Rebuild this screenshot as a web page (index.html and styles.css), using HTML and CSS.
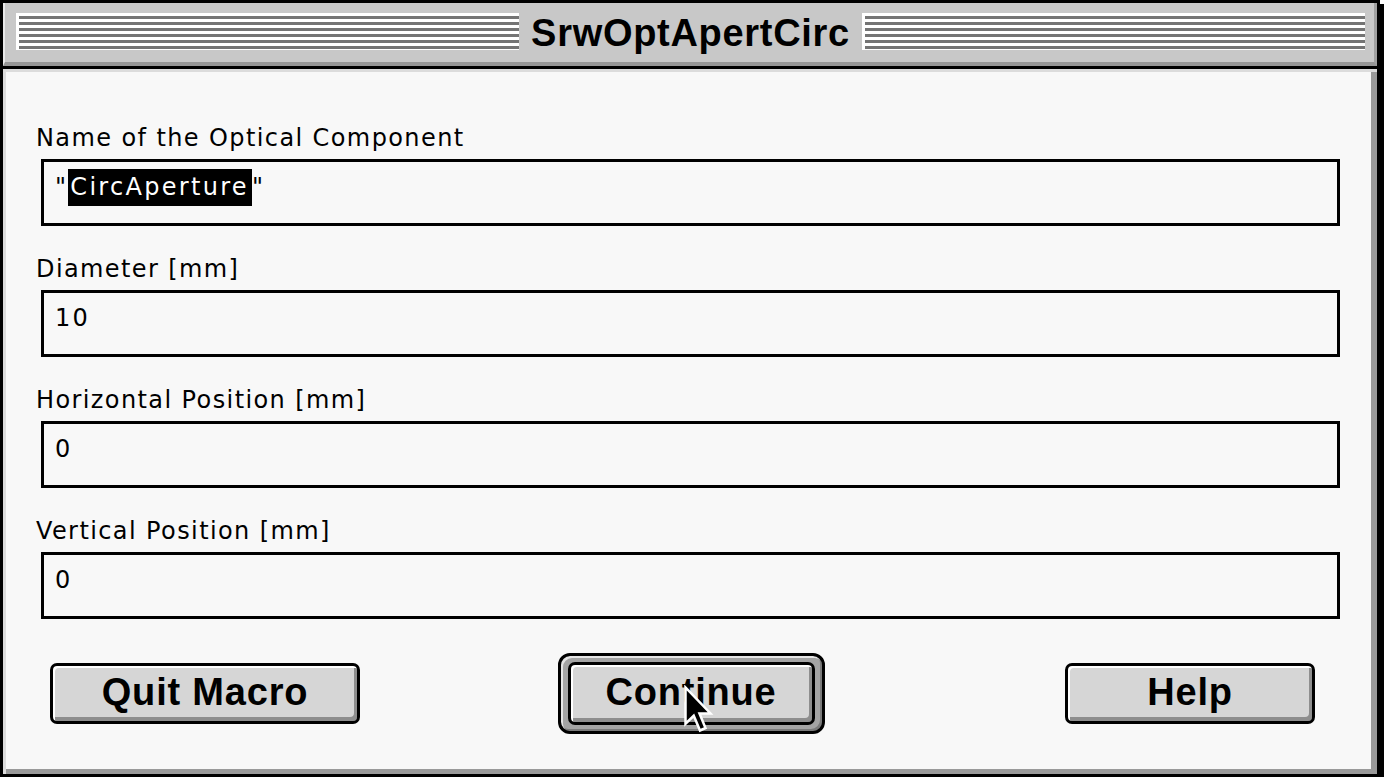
FILE: index.html
```html
<!DOCTYPE html>
<html>
<head>
<meta charset="utf-8">
<title>SrwOptApertCirc</title>
<link rel="stylesheet" href="styles.css">
</head>
<body>
<div class="window">
  <div class="titlebar">
    <div class="stripes"></div>
    <div class="title">SrwOptApertCirc</div>
    <div class="stripes"></div>
  </div>
  <div class="content">
    <div class="group">
      <div class="label">Name of the Optical Component</div>
      <div class="field">"<span class="sel">CircAperture</span>"</div>
    </div>
    <div class="group">
      <div class="label">Diameter [mm]</div>
      <div class="field">10</div>
    </div>
    <div class="group">
      <div class="label">Horizontal Position [mm]</div>
      <div class="field">0</div>
    </div>
    <div class="group">
      <div class="label">Vertical Position [mm]</div>
      <div class="field">0</div>
    </div>
    <div class="buttons">
      <div class="btn btn-quit">Quit Macro</div>
      <div class="ring"><div class="btn btn-continue">Continue</div></div>
      <div class="btn btn-help">Help</div>
    </div>
  </div>
  <svg class="cursor" width="34" height="50" viewBox="0 0 13.6 20" xmlns="http://www.w3.org/2000/svg">
    <path d="M1 1 L1 15.5 L4.3 12.3 L6.8 18.2 L9 17.2 L6.6 11.4 L11 11.4 Z" fill="#000" stroke="#fff" stroke-width="1" stroke-linejoin="miter"/>
  </svg>
</div>
</body>
</html>
```

FILE: styles.css
```css
* { box-sizing: border-box; }

html, body {
  margin: 0;
  padding: 0;
  background: #ffffff;
}

.window {
  position: relative;
  width: 1380px;
  height: 777px;
  border: 3px solid #000;
  box-shadow: 4px 4px 0 #000;
  display: flex;
  flex-direction: column;
  background: #f8f8f8;
}

.titlebar {
  height: 63px;
  flex: none;
  display: flex;
  align-items: flex-start;
  background: #c8c8c8;
  border-left: 2px solid #e8e8e8;
  border-right: 3px solid #a0a0a0;
  border-bottom: 4px solid #969696;
  padding: 10px 9px 0 11px;
}

.stripes {
  flex: 1;
  height: 37px;
  background: repeating-linear-gradient(to bottom, #ffffff 0, #ffffff 3px, #747474 3px, #747474 6px);
  border-left: 3px solid #ffffff;
}

.title {
  flex: none;
  padding: 0 12px;
  height: 42px;
  margin-top: -1px;
  font-family: "Liberation Sans", Arial, sans-serif;
  font-weight: bold;
  font-size: 38px;
  letter-spacing: 0.7px;
  line-height: 42px;
  color: #000;
}

.content {
  flex: 1;
  border-top: 3px solid #000;
  box-shadow: inset 3px 3px 0 #dcdcdc, inset -6px -5px 0 #9a9a9a;
  padding: 54px 37px 0 33px;
  display: flex;
  flex-direction: column;
}

.group {
  margin-bottom: 28px;
}

.label {
  font-family: "DejaVu Sans", Verdana, sans-serif;
  font-size: 24px;
  letter-spacing: 1.4px;
  line-height: 30px;
  color: #000;
  margin-bottom: 6px;
  white-space: nowrap;
}

.field {
  margin-left: 5px;
  height: 67px;
  border: 3px solid #000;
  background: #f8f8f8;
  padding: 7px 0 0 11px;
  font-family: "DejaVu Sans", Verdana, sans-serif;
  font-size: 24px;
  letter-spacing: 2.3px;
  line-height: 37px;
  color: #000;
  white-space: nowrap;
}

.sel {
  display: inline-block;
  background: #000;
  color: #fff;
  padding: 0 3px 0 2px;
  line-height: 37px;
}

.buttons {
  margin-top: 6px;
  display: grid;
  grid-template-columns: 1fr auto 1fr;
  align-items: center;
  padding: 0 8px 0 14px;
}

.btn {
  border: 3px solid #000;
  border-radius: 7px;
  background: #d6d6d6;
  box-shadow: inset 2px 2px 0 #ffffff, inset -3px -4px 0 #8e8e8e;
  font-family: "Liberation Sans", Arial, sans-serif;
  font-weight: bold;
  font-size: 38px;
  letter-spacing: 0.8px;
  color: #000;
  text-align: center;
  display: flex;
  align-items: center;
  justify-content: center;
  padding-bottom: 2px;
}

.btn-quit {
  justify-self: start;
  width: 310px;
  height: 61px;
}

.ring {
  justify-self: center;
  border: 3px solid #000;
  border-radius: 12px;
  padding: 6px 7px;
  background: #a4a4a4;
  box-shadow: inset 2px 2px 0 #e6e6e6, inset -2px -2px 0 #7a7a7a;
}

.btn-continue {
  width: 247px;
  height: 63px;
}

.btn-help {
  justify-self: end;
  width: 250px;
  height: 61px;
  margin-right: 17px;
}

.cursor {
  position: absolute;
  left: 680px;
  top: 682px;
}
```
